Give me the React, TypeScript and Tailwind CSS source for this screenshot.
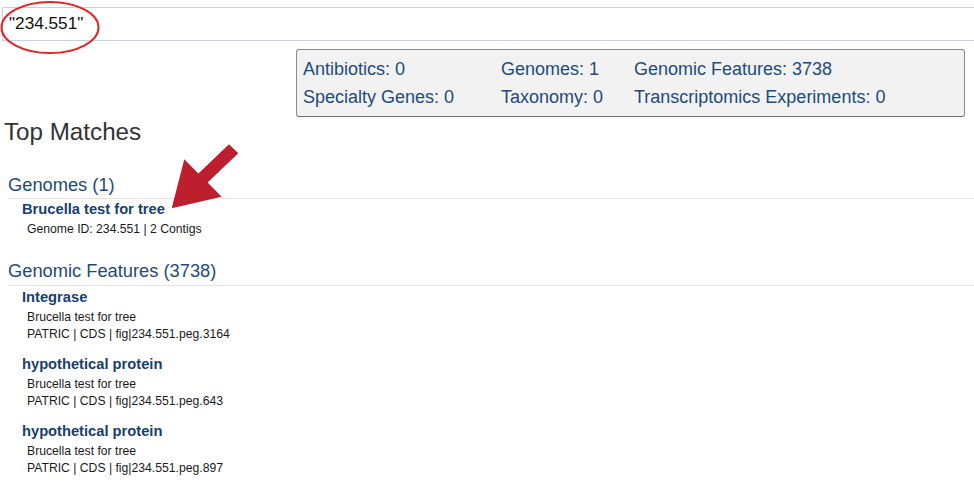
import React from "react";

const blue = "text-[#1d4b7b]";

function Item({ title, lines }: { title: string; lines: string[] }) {
  return (
    <div className="pl-[14px]">
      <div className="text-[14.7px] leading-[18px] font-bold text-[#17406d]">{title}</div>
      <div className="mt-[3px] pl-[5px] text-[12.2px] leading-[17px] text-[#1a1a1a]">
        {lines.map((l, i) => (
          <div key={i}>{l}</div>
        ))}
      </div>
    </div>
  );
}

export default function App() {
  return (
    <div
      className="relative w-[974px] h-[497px] overflow-hidden bg-white"
      style={{ fontFamily: '"Liberation Sans", Arial, sans-serif' }}
    >
      {/* search input */}
      <div className="mt-[7px] ml-[2px] h-[34px] border border-r-0 border-[#c9cfd8] flex items-center pl-[6px] text-[17.2px] text-[#111]">
        "234.551"
      </div>

      {/* summary box */}
      <div className="mt-[8px] ml-[296px] w-[669px] h-[68px] rounded-[3px] border border-[#8a8a8a] border-b-[#6f6f6f] bg-[#f2f2f2] pl-[6px] pt-[5px]">
        <div className={`grid grid-cols-[198px_133px_1fr] text-[18px] leading-[28px] ${blue}`}>
          <div>Antibiotics: 0</div>
          <div>Genomes: 1</div>
          <div>Genomic Features: 3738</div>
          <div>Specialty Genes: 0</div>
          <div>Taxonomy: 0</div>
          <div>Transcriptomics Experiments: 0</div>
        </div>
      </div>

      {/* Top Matches */}
      <div className="mt-[1px] ml-[4px] text-[24.2px] leading-[28px] text-[#333]">Top Matches</div>

      <div className="ml-[8px] mt-[28px]">
        <div className={`text-[18.3px] leading-[22px] pb-[2px] border-b border-[#e6e6e6] ${blue}`}>Genomes (1)</div>
        <div className="mt-[1px]">
          <Item title="Brucella test for tree" lines={["Genome ID: 234.551 | 2 Contigs"]} />
        </div>

        <div className={`mt-[22px] text-[18.3px] leading-[22px] pb-[3px] border-b border-[#e6e6e6] ${blue}`}>
          Genomic Features (3738)
        </div>
        <div className="mt-[2px] flex flex-col gap-[12px]">
          <Item title="Integrase" lines={["Brucella test for tree", "PATRIC | CDS | fig|234.551.peg.3164"]} />
          <Item title="hypothetical protein" lines={["Brucella test for tree", "PATRIC | CDS | fig|234.551.peg.643"]} />
          <Item title="hypothetical protein" lines={["Brucella test for tree", "PATRIC | CDS | fig|234.551.peg.897"]} />
        </div>
      </div>

      {/* annotations */}
      <svg className="absolute left-0 top-0 pointer-events-none" width="974" height="497">
        <ellipse cx="50" cy="27.5" rx="48.5" ry="25.5" fill="none" stroke="#e0262b" strokeWidth="2" />
        <polygon
          points="171.7,208.3 184.3,159.3 198.4,173.4 229,144.3 238.3,153.3 207.6,182.6 221.7,196.7"
          fill="#bd1f2f"
        />
      </svg>
    </div>
  );
}
